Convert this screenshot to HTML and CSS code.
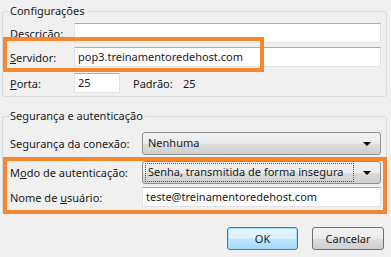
FILE: index.html
```html
<!DOCTYPE html>
<html lang="pt-BR">

<head>
    <meta charset="UTF-8">
    <meta name="viewport" content="width=device-width, initial-scale=1.0">
    <title>Configurações do servidor</title>
    <link rel="stylesheet" href="styles.css">
</head>

<body>
    <div class="dialog">
        <fieldset class="group group-config">
            <legend>Configurações</legend>
            <div class="row">
                <span class="label label-short">Descrição:</span>
                <div class="field field-wide"></div>
            </div>
            <div class="row row-server">
                <span class="label label-short"><u>S</u>ervidor:</span>
                <div class="field field-wide">pop3.treinamentoredehost.com</div>
            </div>
            <div class="row row-port">
                <span class="label label-short"><u>P</u>orta:</span>
                <div class="field field-port">25</div>
                <span class="default-label">Padrão:</span>
                <span class="default-value">25</span>
            </div>
        </fieldset>

        <fieldset class="group group-security">
            <legend>Segurança e autenticação</legend>
            <div class="row row-combo">
                <span class="label label-long">Se<u>g</u>urança da conexão:</span>
                <div class="combo">
                    <span class="combo-value">Nenhuma</span>
                    <span class="arrow"></span>
                </div>
            </div>
            <div class="row row-combo">
                <span class="label label-long">M<u>o</u>do de autenticação:</span>
                <div class="combo">
                    <span class="combo-value focused">Senha, transmitida de forma insegura</span>
                    <span class="arrow"></span>
                </div>
            </div>
            <div class="row row-user">
                <span class="label label-long">Nome de <u>u</u>suário:</span>
                <div class="field field-wide">teste@treinamentoredehost.com</div>
            </div>
        </fieldset>

        <div class="buttons">
            <button class="btn btn-default">OK</button>
            <button class="btn">Cancelar</button>
        </div>

        <div class="mark mark-server"></div>
        <div class="mark mark-auth"></div>
    </div>
</body>

</html>
```

FILE: styles.css
```css
body {
    margin: 0;
    padding: 0;
    background-color: #f0f0f0;
    font-family: "Noto Sans", "Open Sans", sans-serif;
    font-size: 11px;
    color: #1a1a1a;
    white-space: nowrap;
}

.dialog {
    position: relative;
    width: 391px;
    height: 257px;
    padding-top: 3px;
    box-sizing: border-box;
}

.group {
    margin: 0 4px 0 2px;
    padding: 0 5px 0 7px;
    border: 1px solid #d5dbe0;
    border-radius: 3px;
}

.group legend {
    margin-left: -2px;
    padding: 0 2px;
    line-height: 16px;
}

.group-config {
    padding-top: 4px;
    padding-bottom: 3px;
}

.group-security {
    margin-top: 11px;
    padding-top: 8px;
    padding-bottom: 6px;
}

.row {
    display: flex;
    align-items: center;
    height: 20px;
}

.row-server {
    margin-top: 4px;
}

.row-port {
    margin-top: 6px;
}

.row-combo {
    height: 23px;
}

.row-combo + .row-combo {
    margin-top: 6px;
}

.row-user {
    margin-top: 3px;
}

.label {
    flex: none;
}

.label-short {
    width: 64px;
}

.label-long {
    width: 132px;
}

.field {
    height: 20px;
    box-sizing: border-box;
    padding: 0 3px;
    line-height: 18px;
    background-color: #fff;
    border: 1px solid #e2e3ea;
    border-top-color: #abadb3;
}

.field-wide {
    flex: 1;
}

.field-port {
    width: 46px;
}

.default-label {
    margin-left: 13px;
    width: 50px;
}

.combo {
    flex: 1;
    display: flex;
    align-items: center;
    height: 23px;
    box-sizing: border-box;
    padding: 2px;
    border: 1px solid #8e8f8f;
    border-radius: 3px;
    background: linear-gradient(#f2f2f2 0%, #ebebeb 50%, #dddddd 51%, #cfcfcf 100%);
}

.combo-value {
    flex: 1;
    height: 17px;
    line-height: 15px;
    padding: 0 2px;
    border: 1px dotted transparent;
}

.combo-value.focused {
    border-color: #555;
    margin-right: 3px;
}

.arrow {
    width: 0;
    height: 0;
    margin: 1px 7px 0 6px;
    border-left: 4px solid transparent;
    border-right: 4px solid transparent;
    border-top: 4px solid #000;
}

.buttons {
    display: flex;
    justify-content: flex-end;
    gap: 14px;
    margin-top: 13px;
    padding-right: 7px;
}

.btn {
    width: 72px;
    height: 23px;
    padding: 0;
    font-family: inherit;
    font-size: 11px;
    color: #1a1a1a;
    border: 1px solid #707070;
    border-radius: 3px;
    background: linear-gradient(#f2f2f2 0%, #ebebeb 50%, #dddddd 51%, #cfcfcf 100%);
}

.btn-default {
    width: 71px;
    border-color: #3c7fb1;
    box-shadow: inset 0 0 0 1px #9fdcf8;
    background: linear-gradient(#eaf6fd 0%, #d9f0fc 50%, #bee6fd 51%, #a7d9f5 100%);
}

.mark {
    position: absolute;
    border: 4px solid #f7862d;
    box-sizing: border-box;
}

.mark-server {
    left: 3px;
    top: 37px;
    width: 261px;
    height: 35px;
}

.mark-auth {
    left: 3px;
    top: 157px;
    width: 384px;
    height: 57px;
}
```
